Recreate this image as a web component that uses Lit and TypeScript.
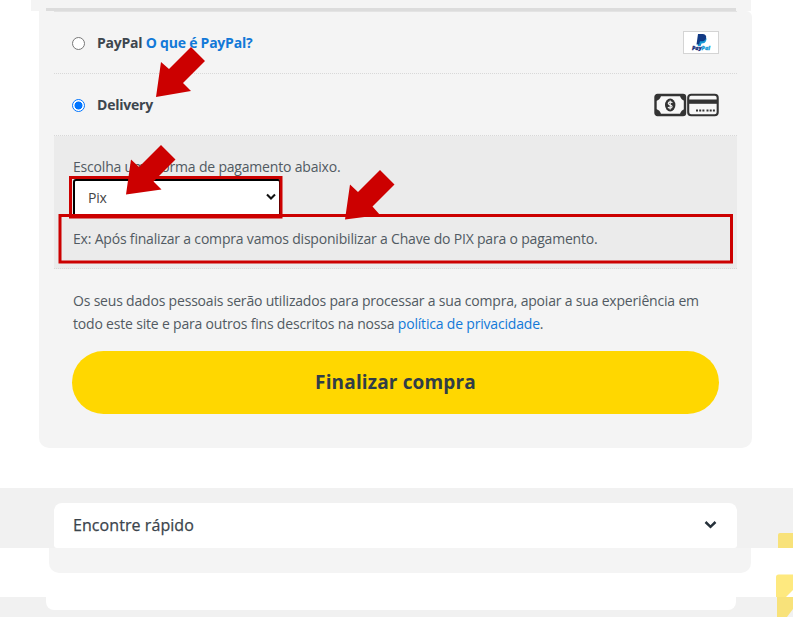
import { LitElement, html, css } from "lit";
import { customElement } from "lit/decorators.js";

@customElement("app-root")
export class AppRoot extends LitElement {
  static styles = css`
    :host {
      display: block;
      position: relative;
      width: 793px;
      height: 617px;
      overflow: hidden;
      background: #fff;
      color: #515a62;
      font: 14px/23px "Open Sans", sans-serif;
    }
    * { box-sizing: border-box; }
    .head { height: 11px; margin: 0 42px 0 31px; padding: 8px 15px 0; background: #f4f4f4; }
    .rule { height: 3px; background: #dcdcdc; }
    .card { height: 437px; margin: 0 41px 0 39px; padding: 0 15px; background: #f4f4f4; border-radius: 0 6px 10px 10px; letter-spacing: -0.19px; }
    .method { display: flex; align-items: center; height: 63px; padding: 0 18px; border-bottom: 1px dotted #d8d8d8; border-top: 1px solid #e3e3e3; font-weight: 700; color: #3d464e; }
    .delivery { height: 62px; border-top: 0; }
    .radio { width: 13px; height: 13px; margin: 1px 12px 0 0; border: 1px solid #777; border-radius: 50%; background: #fff; }
    .on { border-color: #0075ff; background: radial-gradient(circle, #0075ff 0 3.7px, #fff 4.3px); }
    .label { flex: 1; white-space: pre; letter-spacing: -0.23px; }
    a { color: #1279d8; text-decoration: none; }
    .paypal { display: flex; flex-direction: column; align-items: center; width: 36px; height: 23px; border: 1px solid #d4d4d4; background: #fff; letter-spacing: 0; }
    .cash { display: block; margin-right: -1px; }
    .box { height: 133px; padding: 19px 19px 0; background: #ebebeb; border-bottom: 1px dotted #d8d8d8; }
    .line { white-space: nowrap; }
    .select { display: flex; align-items: center; justify-content: space-between; width: 208px; height: 38px; margin-top: 1px; padding: 0 2px 2px 13px; border: 2px solid #000; border-radius: 3px; background: #fff; color: #444; }
    .hint { margin-top: 10px; }
    .terms { padding: 20px 18px 0 19px; white-space: nowrap; }
    .buy { display: flex; align-items: center; justify-content: center; height: 63px; margin: 16px 18px 0; border-radius: 32px; background: #ffd700; color: #303d47; font-size: 19px; font-weight: 700; letter-spacing: 0.15px; }
    .band { height: 60px; margin-top: 40px; padding: 15px 56px 0 54px; background: #f1f1f1; }
    .panel { display: flex; align-items: center; justify-content: space-between; height: 45px; padding: 0 20px 0 19px; background: #fff; border-radius: 8px 8px 3px 3px; color: #3b444c; font-size: 16px; font-weight: 500; letter-spacing: 0.07px; -webkit-text-stroke: 0.25px #3b444c; }
    .panel svg { margin-bottom: 2px; }
    .tail { height: 25px; margin: 0 42px 0 49px; border-radius: 0 0 10px 10px; background: #f4f4f4; }
    .bottom { height: 20px; margin-top: 24px; padding: 0 57px 0 46px; background: #f1f1f1; }
    .slip { height: 13px; background: #fff; border-radius: 0 0 8px 8px; }
    .marks { position: absolute; inset: 0; pointer-events: none; }
  `;

  render() {
    return html`
      <div class="head"><div class="rule"></div></div>
      <main class="card">
        <div class="method">
          <span class="radio"></span>
          <span class="label">PayPal <a>O que é PayPal?</a></span>
          <span class="paypal">
            <svg width="34" height="21" viewBox="0 0 34 21">
              <path d="M15.500 4.500h5q3 1 1.500 4.500-1 2.500-4.500 2.500l-.8 2.500h-3z" fill="#159bd7" />
              <path d="M14 2h5q4 .5 3 4.500-1 3-5 2.800h-1l-.9 3.200H12.500z" fill="#123a84" />
              <text x="8" y="18.300" font-family="Open Sans, sans-serif" font-size="5.400" font-weight="800" font-style="italic" textLength="18" fill="#17307c" stroke="#17307c" stroke-width=".3">Pay<tspan fill="#159bd7" stroke="#159bd7">Pal</tspan></text>
            </svg>
          </span>
        </div>
        <div class="method delivery">
          <span class="radio on"></span>
          <span class="label">Delivery</span>
          <svg class="cash" width="34" height="24" viewBox="0 0 34 24">
            <rect x="1.500" y="2" width="29.500" height="20" rx="2" fill="#f7f7f7" stroke="#333" stroke-width="2.400" />
            <path d="M2 3h5q-1 4-5 5zM31 3h-5q1 4 5 5zM2 21h5q-1-4-5-5zM31 21h-5q1-4 5-5z" fill="#333" />
            <ellipse cx="16.200" cy="12" rx="5.200" ry="6.500" fill="#333" />
            <path d="M18.400 9.700q-2-1.500-3.600-.4-1.300 1.500.7 2.400l1.500.6q1.800 1 .5 2.400-1.700 1-3.600-.5M16.200 7.500v9" fill="none" stroke="#f4f4f4" stroke-width="1.200" />
          </svg>
          <svg width="32" height="24" viewBox="0 0 32 24">
            <rect x="1.200" y="1.700" width="29.500" height="20.600" rx="3" fill="#f7f7f7" stroke="#333" stroke-width="2.100" />
            <path d="M1 6.500h30v4.300H1z" fill="#333" />
            <path d="M9 17.500h8.500M19.500 17.500H29" stroke="#333" stroke-width="2" stroke-dasharray="2 1.200" />
          </svg>
        </div>
        <section class="box">
          <div class="line">Escolha uma forma de pagamento abaixo.</div>
          <div class="select">
            <span>Pix</span>
            <svg width="12" height="8" viewBox="0 0 12 8"><path d="M2 1.500l4 4 4-4" fill="none" stroke="#111" stroke-width="2.100" /></svg>
          </div>
          <div class="line hint">Ex: Após finalizar a compra vamos disponibilizar a Chave do PIX para o pagamento.</div>
        </section>
        <div class="terms">
          Os seus dados pessoais serão utilizados para processar a sua compra, apoiar a sua experiência em<br />
          todo este site e para outros fins descritos na nossa <a>política de privacidade</a>.
        </div>
        <div class="buy">Finalizar compra</div>
      </main>
      <footer>
        <div class="band">
          <div class="panel">
            <span>Encontre rápido</span>
            <svg width="13" height="10" viewBox="0 0 13 10"><path d="M1.500 2l5 4.800 5-4.800" fill="none" stroke="#26313a" stroke-width="2.500" /></svg>
          </div>
        </div>
        <div class="tail"></div>
        <div class="bottom"><div class="slip"></div></div>
      </footer>
      <svg class="marks" width="793" height="617" viewBox="0 0 793 617">
        <path d="M778 548v-13q0-2 2-2h13v15z" fill="#f8e27a" />
        <path d="M776 597v-20q0-2.500 2.500-2.500H793v15.500l-7 7z" fill="#fee97f" />
        <path d="M777 597h16v12l-6 8h-10z" fill="#f8e27a" />
        <g fill="none" stroke="#c00" stroke-width="3">
          <rect x="70.500" y="177.500" width="210.500" height="39.500" />
          <rect x="60" y="215.500" width="671.500" height="46.500" />
        </g>
        <g fill="#c00">
          <path d="M156 97l5-35 8 7 22-22 14 14-22 22 8 8z" />
          <path d="M126 194.500l5-35 8 7.500 22-22 14.500 14.500-22 22 8 8z" />
          <path d="M345 219.500l5-35 8 7.500 22-22 14.500 14.500-22 22 7.500 8.500z" />
        </g>
      </svg>
    `;
  }
}
